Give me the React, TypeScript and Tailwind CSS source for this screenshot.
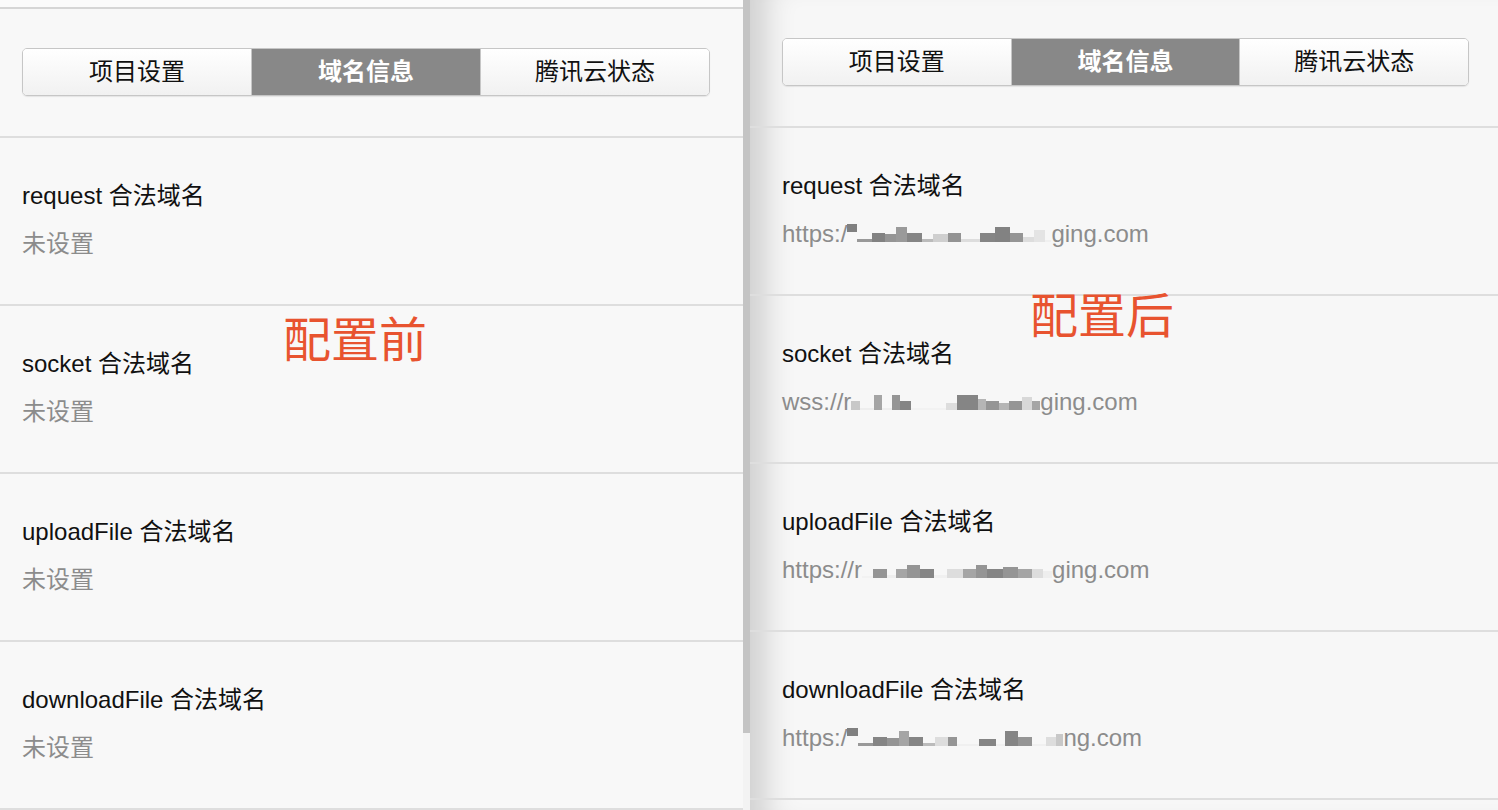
import React from 'react';

type Block = { w: number; h: number; c: string; up?: number };

const TABS = ['项目设置', '域名信息', '腾讯云状态'];

const LABELS = ['request', 'socket', 'uploadFile', 'downloadFile'];

// pixelated (mosaic) middle part of the domains
const AFTER: { prefix: string; width: number; blocks: Block[]; suffix: string }[] = [
  {
    prefix: 'https:/',
    width: 204,
    blocks: [
      { w: 9, h: 8, c: '#808080', up: 10 },
      { w: 14, h: 3, c: '#999' },
      { w: 12, h: 9, c: '#828282' },
      { w: 10, h: 8, c: '#959595' },
      { w: 10, h: 15, c: '#9a9a9a' },
      { w: 14, h: 9, c: '#858585' },
      { w: 10, h: 3, c: '#bbb' },
      { w: 14, h: 8, c: '#cfcfcf' },
      { w: 12, h: 9, c: '#939393' },
      { w: 18, h: 3, c: '#ddd' },
      { w: 14, h: 9, c: '#858585' },
      { w: 14, h: 15, c: '#828282' },
      { w: 12, h: 9, c: '#959595' },
      { w: 10, h: 5, c: '#ddd' },
      { w: 10, h: 12, c: '#e4e4e4' },
      { w: 6, h: 2, c: '#f0f0f0' },
    ],
    suffix: 'ging.com',
  },
  {
    prefix: 'wss://r',
    width: 189,
    blocks: [
      { w: 8, h: 9, c: '#c8c8c8' },
      { w: 14, h: 2, c: '#eee' },
      { w: 7, h: 15, c: '#a5a5a5' },
      { w: 10, h: 2, c: '#eee' },
      { w: 8, h: 15, c: '#959595' },
      { w: 10, h: 9, c: '#858585' },
      { w: 34, h: 2, c: '#f2f2f2' },
      { w: 10, h: 7, c: '#ddd' },
      { w: 20, h: 15, c: '#858585' },
      { w: 8, h: 11, c: '#b5b5b5' },
      { w: 12, h: 9, c: '#959595' },
      { w: 10, h: 7, c: '#b5b5b5' },
      { w: 12, h: 9, c: '#959595' },
      { w: 10, h: 13, c: '#d8d8d8' },
      { w: 8, h: 9, c: '#a5a5a5' },
    ],
    suffix: 'ging.com',
  },
  {
    prefix: 'https://r',
    width: 190,
    blocks: [
      { w: 10, h: 2, c: '#f2f2f2' },
      { w: 12, h: 9, c: '#959595' },
      { w: 8, h: 3, c: '#eee' },
      { w: 10, h: 9, c: '#a5a5a5' },
      { w: 12, h: 13, c: '#959595' },
      { w: 12, h: 9, c: '#858585' },
      { w: 12, h: 3, c: '#f0f0f0' },
      { w: 14, h: 9, c: '#ddd' },
      { w: 12, h: 9, c: '#a5a5a5' },
      { w: 10, h: 13, c: '#959595' },
      { w: 14, h: 9, c: '#858585' },
      { w: 14, h: 11, c: '#959595' },
      { w: 12, h: 9, c: '#a5a5a5' },
      { w: 10, h: 9, c: '#ddd' },
      { w: 8, h: 7, c: '#eee' },
    ],
    suffix: 'ging.com',
  },
  {
    prefix: 'https:/',
    width: 216,
    blocks: [
      { w: 9, h: 8, c: '#808080', up: 10 },
      { w: 12, h: 3, c: '#999' },
      { w: 12, h: 9, c: '#858585' },
      { w: 10, h: 8, c: '#959595' },
      { w: 8, h: 15, c: '#a5a5a5' },
      { w: 12, h: 9, c: '#858585' },
      { w: 10, h: 3, c: '#bbb' },
      { w: 10, h: 9, c: '#ddd' },
      { w: 8, h: 9, c: '#959595' },
      { w: 18, h: 2, c: '#f0f0f0' },
      { w: 14, h: 7, c: '#858585' },
      { w: 8, h: 2, c: '#f0f0f0' },
      { w: 10, h: 15, c: '#858585' },
      { w: 12, h: 9, c: '#959595' },
      { w: 12, h: 2, c: '#f0f0f0' },
      { w: 8, h: 9, c: '#ddd' },
      { w: 6, h: 12, c: '#c8c8c8' },
    ],
    suffix: 'ng.com',
  },
];

const font = { fontFamily: '"Liberation Sans", "Noto Sans CJK SC", sans-serif' };

const Tabs: React.FC = () => (
  <div className="flex h-[48px] rounded-[5px] border border-[#c6c6c6] overflow-hidden shadow-[0_1px_1px_rgba(0,0,0,0.08)]">
    {TABS.map((t, i) => (
      <div
        key={t}
        className={`flex-1 flex items-center justify-center text-[24px] ${
          i === 1
            ? 'bg-[#888888] text-white font-bold'
            : 'bg-gradient-to-b from-white to-[#f1f1f1] text-[#111]'
        } ${i > 0 ? 'border-l border-[#c6c6c6]' : ''}`}
      >
        {t}
      </div>
    ))}
  </div>
);

const Mosaic: React.FC<{ width: number; blocks: Block[] }> = ({ width, blocks }) => (
  <span className="inline-flex items-end h-[24px] align-top blur-[0.6px]" style={{ width }}>
    {blocks.map((b, i) => (
      <span
        key={i}
        className="block"
        style={{ flexGrow: b.w, flexBasis: 0, height: b.h, background: b.c, marginBottom: b.up ?? 0 }}
      />
    ))}
  </span>
);

const Row: React.FC<{ label: string; pad: string; children: React.ReactNode }> = ({ label, pad, children }) => (
  <div className={`h-[168px] border-b-2 border-[#dedede] pt-[42px] flex flex-col gap-[16px] ${pad}`}>
    <div className="text-[24px] leading-[32px] text-[#111]">{label} 合法域名</div>
    <div className="text-[24px] leading-[32px] text-[#8c8c8c] whitespace-nowrap">{children}</div>
  </div>
);

const App: React.FC = () => {
  return (
    <div className="relative flex h-[810px] w-[1498px] overflow-hidden bg-[#f7f7f7]" style={font}>
      {/* Before */}
      <div className="w-[743px] shrink-0 bg-[#f8f8f8] flex flex-col">
        <div className="h-[7px] bg-[#fbfbfb] border-b-2 border-[#d6d6d6] box-content" />
        <div className="pl-[22px] pr-[33px] pt-[39px] pb-[40px] border-b-2 border-[#dedede]">
          <Tabs />
        </div>
        {LABELS.map((l) => (
          <Row key={l} label={l} pad="pl-[22px]">
            未设置
          </Row>
        ))}
      </div>

      {/* scrollbar */}
      <div className="w-[7px] shrink-0 bg-[#f3f3f3]">
        <div className="h-[733px] bg-[#c4c4c4]" />
      </div>

      {/* After */}
      <div className="flex-1 bg-[#f7f7f7] shadow-[inset_38px_0_30px_-22px_rgba(0,0,0,0.16)] flex flex-col">
        <div className="pl-[32px] pr-[29px] pt-[38px] pb-[40px] border-b-2 border-[#dedede]">
          <Tabs />
        </div>
        {LABELS.map((l, i) => (
          <Row key={l} label={l} pad="pl-[32px]">
            {AFTER[i].prefix}
            <Mosaic width={AFTER[i].width} blocks={AFTER[i].blocks} />
            {AFTER[i].suffix}
          </Row>
        ))}
      </div>

      {/* annotations */}
      <div className="absolute left-[283px] top-[317px] text-[48px] leading-none text-[#e8532f]">配置前</div>
      <div className="absolute left-[1030px] top-[293px] text-[48px] leading-none text-[#e8532f]">配置后</div>
    </div>
  );
};

export default App;
